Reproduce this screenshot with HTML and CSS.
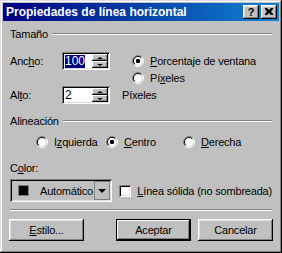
FILE: index.html
```html
<!DOCTYPE html>
<html lang="es">
<head>
    <meta charset="UTF-8">
    <title>Propiedades de línea horizontal</title>
    <link rel="stylesheet" href="styles.css">
</head>
<body>
    <svg width="0" height="0" class="defs">
        <symbol id="radio" viewBox="0 0 12 12">
            <circle cx="6" cy="6" r="4.5" fill="#fff"/>
            <path d="M2.1 9.9 A5.5 5.5 0 0 1 9.9 2.1" fill="none" stroke="#808080"/>
            <path d="M9.9 2.1 A5.5 5.5 0 0 1 2.1 9.9" fill="none" stroke="#fff"/>
            <path d="M2.8 9.2 A4.5 4.5 0 0 1 9.2 2.8" fill="none" stroke="#000"/>
            <path d="M9.2 2.8 A4.5 4.5 0 0 1 2.8 9.2" fill="none" stroke="#dfdfdf"/>
        </symbol>
        <symbol id="radio-on" viewBox="0 0 12 12">
            <use href="#radio"/>
            <rect x="4" y="4" width="4" height="4" rx="1.2" fill="#000"/>
        </symbol>
    </svg>

    <div class="window">
        <div class="titlebar">
            <span class="title">Propiedades de línea horizontal</span>
            <div class="title-buttons">
                <span class="tbtn help">?</span>
                <span class="tbtn">
                    <svg width="8" height="7" viewBox="0 0 8 7"><path d="M0 0h2l2 2 2-2h2v1l-2 2.5 2 2.5v1h-2l-2-2-2 2h-2v-1l2-2.5-2-2.5z" fill="#000"/></svg>
                </span>
            </div>
        </div>

        <div class="content">
            <div class="group-head"><span>Tamaño</span><span class="rule"></span></div>
            <div class="size">
                <span class="lbl">Anc<u>h</u>o:</span>
                <div class="spin">
                    <div class="edit"><span class="sel">100</span></div>
                    <div class="spin-btns"><span class="sb"><i class="up"></i></span><span class="sb"><i class="down"></i></span></div>
                </div>
                <div class="radio-stack">
                    <div class="opt"><svg class="rb"><use href="#radio-on"/></svg><span><u>P</u>orcentaje de ventana</span></div>
                    <div class="opt"><svg class="rb"><use href="#radio"/></svg><span>Pí<u>x</u>eles</span></div>
                </div>
                <span class="lbl">Al<u>t</u>o:</span>
                <div class="spin">
                    <div class="edit"><span class="val">2</span></div>
                    <div class="spin-btns"><span class="sb"><i class="up"></i></span><span class="sb"><i class="down"></i></span></div>
                </div>
                <span class="lbl">Píxeles</span>
            </div>

            <div class="group-head align-head"><span>Alineación</span><span class="rule"></span></div>
            <div class="align-row">
                <div class="opt w1"><svg class="rb"><use href="#radio"/></svg><span>I<u>z</u>quierda</span></div>
                <div class="opt w2"><svg class="rb"><use href="#radio-on"/></svg><span><u>C</u>entro</span></div>
                <div class="opt"><svg class="rb"><use href="#radio"/></svg><span><u>D</u>erecha</span></div>
            </div>

            <div class="color-lbl">C<u>o</u>lor:</div>
            <div class="color-row">
                <div class="combo">
                    <div class="combo-val"><span class="swatch"></span><span>Automático</span></div>
                    <span class="combo-btn"><i class="down"></i></span>
                </div>
                <div class="check"><span class="box"></span><span><u>L</u>ínea sólida (no sombreada)</span></div>
            </div>

            <div class="sep"></div>

            <div class="buttons">
                <span class="btn first"><u>E</u>stilo...</span>
                <span class="btn default">Aceptar</span>
                <span class="btn">Cancelar</span>
            </div>
        </div>
    </div>
</body>
</html>
```

FILE: styles.css
```css
body {
    margin: 0;
    background: #c0c0c0;
}
.defs {
    position: absolute;
}
.window {
    width: 282px;
    height: 253px;
    box-sizing: border-box;
    padding: 3px;
    background: #c0c0c0;
    box-shadow: inset -1px -1px #000, inset 1px 1px #dfdfdf, inset -2px -2px #808080, inset 2px 2px #fff;
    font: 11px "Liberation Sans", Arial, sans-serif;
    letter-spacing: -0.2px;
    color: #000;
    white-space: nowrap;
}
u {
    text-underline-offset: 1px;
}
.titlebar {
    height: 18px;
    display: flex;
    align-items: center;
    justify-content: space-between;
    padding: 0 2px 0 3px;
    background: linear-gradient(to right, #000080, #1084d0);
    color: #fff;
    font-weight: bold;
    font-size: 12px;
    letter-spacing: 0;
}
.title-buttons {
    display: flex;
    gap: 2px;
}
.tbtn {
    width: 16px;
    height: 14px;
    box-sizing: border-box;
    background: #c0c0c0;
    box-shadow: inset -1px -1px #000, inset 1px 1px #fff, inset -2px -2px #808080, inset 2px 2px #dfdfdf;
    color: #000;
    display: flex;
    align-items: center;
    justify-content: center;
    font-size: 11px;
    padding-bottom: 1px;
}
.content {
    padding: 0 7px;
}
.group-head {
    margin-top: 6px;
    height: 13px;
    display: flex;
    align-items: center;
    gap: 4px;
}
.rule {
    flex: 1;
    border-top: 1px solid #808080;
    border-bottom: 1px solid #fff;
}
.size {
    margin-top: 12px;
    display: grid;
    grid-template-columns: 40px 48px 1fr;
    column-gap: 12px;
    align-items: start;
}
.lbl {
    line-height: 18px;
}
.spin {
    width: 48px;
    height: 18px;
    box-sizing: border-box;
    padding: 2px;
    display: flex;
    background: #fff;
    box-shadow: inset 1px 1px #808080, inset -1px -1px #fff, inset 2px 2px #000, inset -2px -2px #dfdfdf;
}
.edit {
    flex: 1;
    display: flex;
    align-items: center;
    padding-left: 1px;
    font-size: 12px;
    letter-spacing: 0;
}
.sel {
    background: #000080;
    color: #fff;
    line-height: 13px;
}
.spin-btns {
    width: 16px;
    display: flex;
    flex-direction: column;
}
.sb {
    flex: 1;
    background: #c0c0c0;
    box-shadow: inset -1px -1px #000, inset 1px 1px #fff, inset -2px -2px #808080;
    display: flex;
    align-items: center;
    justify-content: center;
}
.up {
    border-left: 3px solid transparent;
    border-right: 3px solid transparent;
    border-bottom: 2px solid #000;
}
.down {
    border-left: 3px solid transparent;
    border-right: 3px solid transparent;
    border-top: 2px solid #000;
}
.radio-stack {
    margin-left: 10px;
}
.opt {
    height: 17px;
    display: flex;
    align-items: center;
    gap: 6px;
}
.rb {
    width: 12px;
    height: 12px;
    flex: none;
}
.align-head {
    margin-top: 10px;
}
.align-row {
    margin-top: 6px;
    padding-left: 26px;
    display: flex;
}
.w1 {
    width: 70px;
}
.w2 {
    width: 77px;
}
.color-lbl {
    margin-top: 12px;
    line-height: 13px;
}
.color-row {
    margin-top: 4px;
    display: flex;
    align-items: center;
    gap: 7px;
}
.combo {
    width: 103px;
    height: 23px;
    box-sizing: border-box;
    padding: 2px;
    display: flex;
    background: #c0c0c0;
    box-shadow: inset 1px 1px #808080, inset -1px -1px #fff, inset 2px 2px #000, inset -2px -2px #dfdfdf;
}
.combo-val {
    flex: 1;
    display: flex;
    align-items: center;
    gap: 11px;
    padding-left: 6px;
}
.swatch {
    width: 9px;
    height: 9px;
    background: #000;
    border: 1px solid #808080;
}
.combo-btn {
    width: 16px;
    background: #c0c0c0;
    box-shadow: inset 1px 1px #808080, inset -1px -1px #808080;
    display: flex;
    align-items: center;
    justify-content: center;
}
.combo-btn .down {
    border-left-width: 4px;
    border-right-width: 4px;
    border-top-width: 4px;
}
.check {
    display: flex;
    align-items: center;
    gap: 6px;
}
.box {
    width: 12px;
    height: 12px;
    box-sizing: border-box;
    background: #fff;
    box-shadow: inset 1px 1px #808080, inset -1px -1px #fff, inset 2px 2px #000, inset -2px -2px #dfdfdf;
}
.sep {
    margin-top: 7px;
    border-top: 1px solid #808080;
    border-bottom: 1px solid #fff;
}
.buttons {
    margin: 8px -1px 0;
    display: flex;
    gap: 7px;
}
.btn {
    width: 75px;
    height: 22px;
    box-sizing: border-box;
    display: flex;
    align-items: center;
    justify-content: center;
    background: #c0c0c0;
    box-shadow: inset -1px -1px #000, inset 1px 1px #fff, inset -2px -2px #808080, inset 2px 2px #dfdfdf;
}
.first {
    margin-right: auto;
}
.default {
    box-shadow: inset 0 0 0 1px #000, inset -2px -2px #000, inset 2px 2px #fff, inset -3px -3px #808080;
}
```
